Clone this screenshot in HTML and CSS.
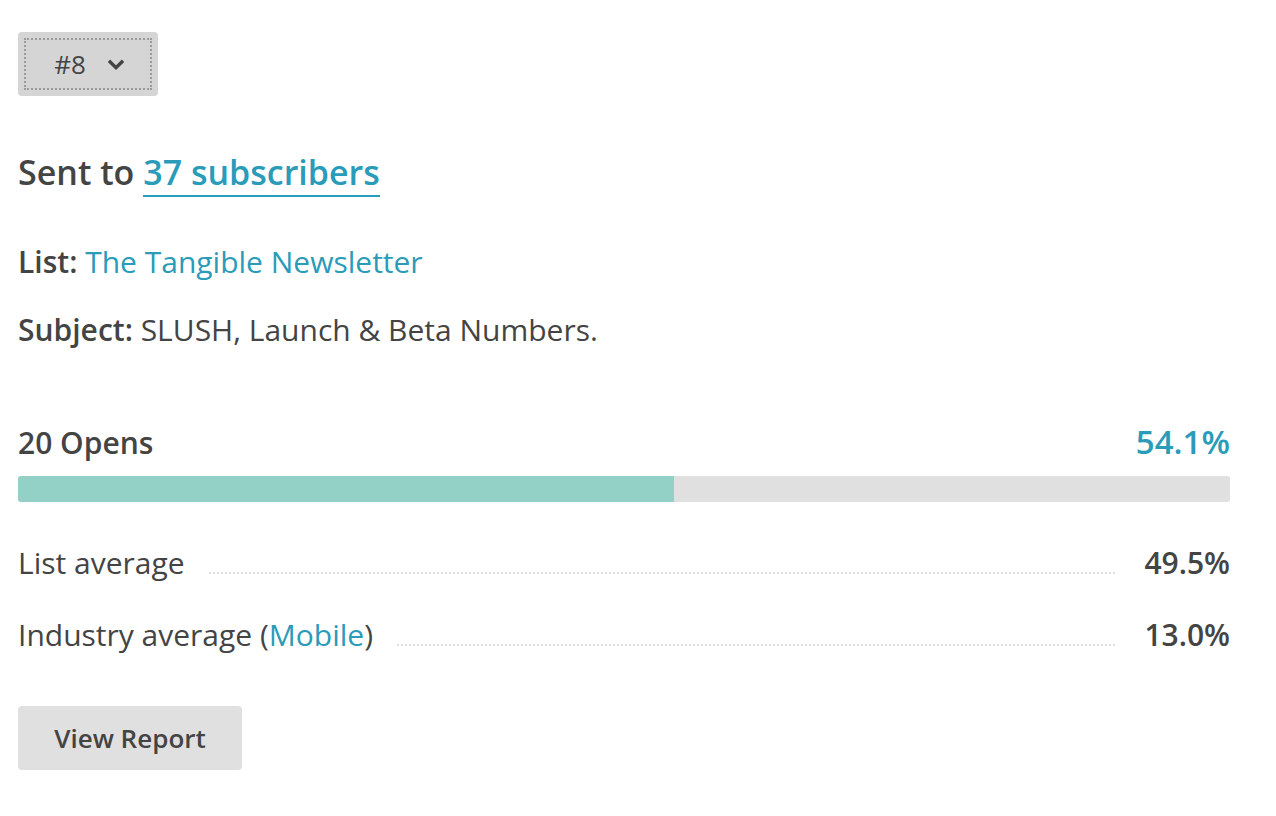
FILE: index.html
```html
<!DOCTYPE html>
<html>
<head>
<meta charset="utf-8">
<link rel="stylesheet" href="styles.css">
</head>
<body>
<div class="panel">
  <button class="select">
    <span class="select-inner">
      <span class="select-label">#8</span>
      <svg class="chev" width="16" height="12" viewBox="0 0 16 12"><path d="M2.2 3 L8 8.6 L13.8 3" fill="none" stroke="#444" stroke-width="3.4" stroke-linecap="square"/></svg>
    </span>
  </button>

  <h2 class="sent">Sent to <a class="sent-link" href="#">37 subscribers</a></h2>

  <p class="meta"><b>List:</b> <a class="link" href="#">The Tangible Newsletter</a></p>
  <p class="meta"><b>Subject:</b> SLUSH, Launch &amp; Beta Numbers.</p>

  <div class="stat-head">
    <span class="stat-title">20 Opens</span>
    <span class="stat-pct">54.1%</span>
  </div>
  <div class="bar"><div class="bar-fill" style="width:54.1%"></div></div>

  <div class="row">
    <span class="row-label">List average</span>
    <span class="leader"></span>
    <span class="row-value">49.5%</span>
  </div>
  <div class="row">
    <span class="row-label">Industry average (<a class="link" href="#">Mobile</a>)</span>
    <span class="leader"></span>
    <span class="row-value">13.0%</span>
  </div>

  <button class="btn">View Report</button>
</div>
</body>
</html>
```

FILE: styles.css
```css
* { box-sizing: border-box; }
html, body { margin: 0; padding: 0; background: #fff; }
body {
  font-family: "Open Sans", "Liberation Sans", sans-serif;
  color: #444;
}
.panel {
  width: 1212px;
  margin-left: 18px;
  padding-top: 32px;
}
.select {
  display: block;
  width: 140px;
  height: 64px;
  padding: 6px;
  border: 0;
  border-radius: 4px;
  background: #d5d5d5;
  font-family: inherit;
  cursor: pointer;
}
.select-inner {
  display: flex;
  align-items: center;
  justify-content: center;
  gap: 22px;
  width: 100%;
  height: 100%;
  border: 2px dotted #9a9a9a;
  padding-left: 2px;
}
.select-label {
  font-size: 26px;
  color: #444;
  font-weight: 400;
}
.chev { display: block; margin-top: 1px; }

.sent {
  margin: 54px 0 0;
  font-size: 34px;
  line-height: 44px;
  font-weight: 600;
  color: #444;
}
.sent-link {
  color: #2a9bb9;
  text-decoration: none;
  border-bottom: 2px solid #2a9bb9;
  padding-bottom: 0;
}
.meta {
  margin: 0;
  font-size: 30px;
  line-height: 40px;
}
.meta:first-of-type { margin-top: 48px; }
.meta + .meta { margin-top: 28px; }
.meta b { font-weight: 600; }
.link { color: #2a9bb9; text-decoration: none; }

.stat-head {
  display: flex;
  justify-content: space-between;
  align-items: baseline;
  height: 40px;
  margin-top: 72px;
  font-size: 30px;
  line-height: 40px;
}
.stat-title { font-weight: 600; }
.stat-pct { color: #2a9bb9; font-size: 33px; font-weight: 600; }
.bar {
  margin-top: 14px;
  height: 26px;
  background: #e0e0e0;
  border-radius: 3px;
  overflow: hidden;
}
.bar-fill { height: 100%; background: #93d1c6; }

.row {
  display: flex;
  align-items: baseline;
  font-size: 30px;
  line-height: 40px;
}
.bar + .row { margin-top: 41px; }
.row + .row { margin-top: 32px; }
.leader {
  flex: 1;
  height: 2px;
  margin: 0 28px 0 24px;
  background-image: repeating-linear-gradient(to right, #dedede 0 2px, transparent 2px 4px);
}
.row-value { font-weight: 600; }

.btn {
  display: block;
  margin-top: 51px;
  width: 224px;
  height: 64px;
  border: 0;
  border-radius: 4px;
  background: #e0e0e0;
  color: #444;
  font-family: inherit;
  font-size: 26px;
  font-weight: 600;
  cursor: pointer;
}
```
